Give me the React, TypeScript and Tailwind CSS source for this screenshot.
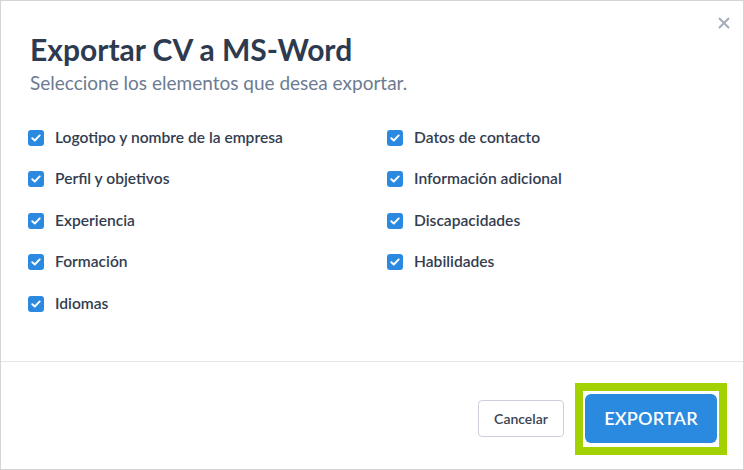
import React from "react";

const leftItems = [
  "Logotipo y nombre de la empresa",
  "Perfil y objetivos",
  "Experiencia",
  "Formación",
  "Idiomas",
];

const rightItems = [
  "Datos de contacto",
  "Información adicional",
  "Discapacidades",
  "Habilidades",
];

function CheckItem({ label }: { label: string }) {
  return (
    <label className="flex items-center gap-[11px] h-[41.5px]">
      <span className="w-[16px] h-[16px] rounded-[3px] bg-[#2b8ae0] flex items-center justify-center shrink-0">
        <svg width="10" height="8" viewBox="0 0 10 8" fill="none">
          <path d="M1.3 4.2 L3.8 6.5 L8.7 1.4" stroke="white" strokeWidth="1.9" strokeLinecap="round" strokeLinejoin="round" />
        </svg>
      </span>
      <span className="text-[15.6px] font-semibold text-[#333d50] leading-none">{label}</span>
    </label>
  );
}

export default function App() {
  return (
    <div
      className="w-[744px] h-[470px] bg-white border border-[#d5d5d5] flex flex-col relative"
      style={{ fontFamily: "Lato, 'Noto Sans', sans-serif" }}
    >
      <button className="absolute right-[12px] top-[15px] text-[#a4acb8]">
        <svg width="14" height="14" viewBox="0 0 14 14">
          <path d="M2.5 2.5 L11.5 11.5 M11.5 2.5 L2.5 11.5" stroke="currentColor" strokeWidth="2" strokeLinecap="round" />
        </svg>
      </button>

      <div className="flex-1 pl-[29px] pt-[30px]">
        <h1 className="text-[30px] font-bold text-[#2d3a50] leading-[36px]">Exportar CV a MS-Word</h1>
        <p className="text-[19px] text-[#6c7b91] leading-[24px] mt-[4px]">
          Seleccione los elementos que desea exportar.
        </p>

        <div className="grid grid-cols-[359px_1fr] mt-[22px] -ml-[2px]">
          <div className="flex flex-col">
            {leftItems.map((l) => (
              <CheckItem key={l} label={l} />
            ))}
          </div>
          <div className="flex flex-col">
            {rightItems.map((l) => (
              <CheckItem key={l} label={l} />
            ))}
          </div>
        </div>
      </div>

      <div className="h-[108px] border-t border-[#e3e5e9] flex items-center justify-end pr-[16px] gap-[11px] pt-[6px]">
        <button className="h-[37px] w-[86px] rounded-[4px] border border-[#ccd1d9] bg-white text-[14px] font-semibold text-[#3a4353]">
          Cancelar
        </button>
        <div className="border-[8px] border-[#a2d300] pt-[3px] pb-[4px] px-[2px] bg-white">
          <button className="h-[49px] w-[132px] rounded-[6px] bg-[#2a8ae0] text-white text-[18px] font-semibold tracking-[0.2px]">
            EXPORTAR
          </button>
        </div>
      </div>
    </div>
  );
}
